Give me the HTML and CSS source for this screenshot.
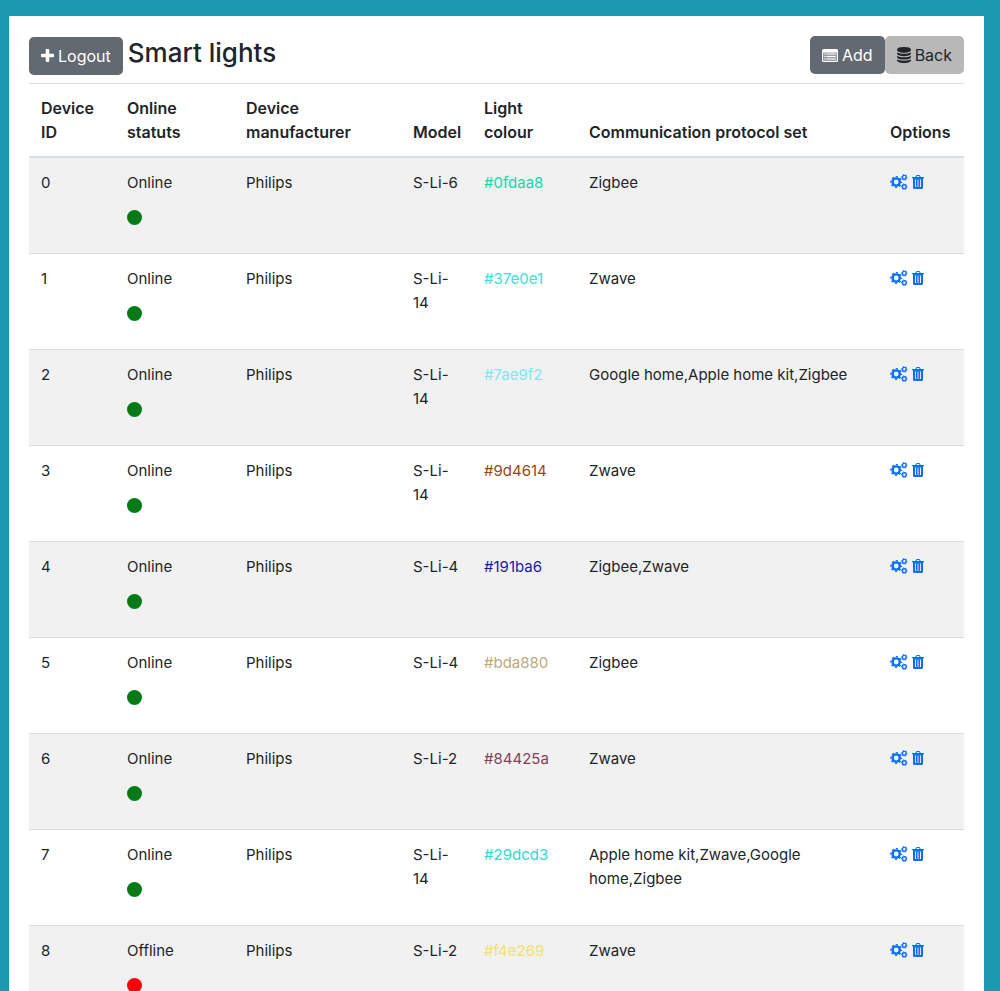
FILE: index.html
```html
<!DOCTYPE html>
<html lang="en">
<head>
<meta charset="utf-8">
<meta name="viewport" content="width=device-width, initial-scale=1">
<title>Smart lights</title>
<link rel="stylesheet" href="styles.css">
</head>
<body>
<svg class="sprite" aria-hidden="true">
  <symbol id="plus" viewBox="192 128 1408 1408"><path d="M1600 736v192q0 40-28 68t-68 28h-416v416q0 40-28 68t-68 28h-192q-40 0-68-28t-28-68v-416h-416q-40 0-68-28t-28-68v-192q0-40 28-68t68-28h416v-416q0-40 28-68t68-28h192q40 0 68 28t28 68v416h416q40 0 68 28t28 68z"/></symbol>
  <symbol id="database" viewBox="128 0 1536 1792"><path d="M896 768q237 0 443-43t325-127v170q0 69-103 128t-280 93.500-385 34.500-385-34.500-280-93.500-103-128v-170q119 84 325 127t443 43zm0 768q237 0 443-43t325-127v170q0 69-103 128t-280 93.500-385 34.500-385-34.500-280-93.500-103-128v-170q119 84 325 127t443 43zm0-384q237 0 443-43t325-127v170q0 69-103 128t-280 93.500-385 34.500-385-34.500-280-93.500-103-128v-170q119 84 325 127t443 43zm0-1152q208 0 385 34.500t280 93.500 103 128v128q0 69-103 128t-280 93.500-385 34.500-385-34.500-280-93.500-103-128v-128q0-69 103-128t280-93.500 385-34.500z"/></symbol>
  <symbol id="list" viewBox="0 0 16 13"><path opacity=".35" d="M1 3h14v9H1z"/><path fill-rule="evenodd" d="M1.500 0h13A1.500 1.500 0 0 1 16 1.500v10a1.500 1.500 0 0 1-1.500 1.500h-13A1.500 1.500 0 0 1 0 11.500v-10A1.500 1.500 0 0 1 1.500 0zM1 3.500v8q0 .5.5.5h13q.5 0 .5-.5v-8zM2.300 4.500h1.200v1.100H2.300zm2.200 0h9.200v1.100H4.500zM2.300 7h1.200v1.100H2.300zm2.200 0h9.200v1.100H4.500zM2.300 9.500h1.200v1.100H2.300zm2.200 0h9.200v1.100H4.500z"/></symbol>
  <symbol id="gears" viewBox="0 0 18 16"><g fill="none" stroke="currentColor"><circle cx="6.200" cy="8" r="3.600" stroke-width="2.400"/><circle cx="6.200" cy="8" r="5.200" stroke-width="1.600" stroke-dasharray="2 2.084" stroke-dashoffset="1"/><circle cx="14.300" cy="3.300" r="1.900" stroke-width="1.400"/><circle cx="14.300" cy="3.300" r="2.800" stroke-width="1" stroke-dasharray="1.300 1.632" stroke-dashoffset=".6"/><circle cx="14.300" cy="12.700" r="1.900" stroke-width="1.400"/><circle cx="14.300" cy="12.700" r="2.800" stroke-width="1" stroke-dasharray="1.300 1.632" stroke-dashoffset=".6"/></g></symbol>
  <symbol id="trash" viewBox="0 0 12 14"><path fill-rule="evenodd" d="M3.300 2l.6-1.300Q4.200 0 5 0h2q.8 0 1.100.7L8.700 2H12v1.200h-1V12.400Q11 14 9.700 14H2.300Q1 14 1 12.400V3.200H0V2zM4.500 2h3L7.100 1.100H4.900zM3.100 4.600v7.400H4V4.600zm2.450 0v7.400h.9V4.600zM8 4.600v7.400h.9V4.600z"/></symbol>
</svg>
<main class="panel">
  <header class="toolbar">
    <div class="heading">
      <button type="button" class="btn btn-dark"><svg class="icon-plus" aria-hidden="true"><use href="#plus"/></svg>Logout</button>
      <h1 class="title">Smart lights</h1>
    </div>
    <div class="actions">
      <button type="button" class="btn btn-dark"><svg class="icon-list" aria-hidden="true"><use href="#list"/></svg>Add</button>
      <button type="button" class="btn btn-light"><svg class="icon-database" aria-hidden="true"><use href="#database"/></svg>Back</button>
    </div>
  </header>
  <table class="lights">
    <colgroup><col class="col-id"><col class="col-status"><col class="col-maker"><col class="col-model"><col class="col-colour"><col><col class="col-options"></colgroup>
    <thead>
      <tr><th scope="col">Device ID</th><th scope="col">Online statuts</th><th scope="col">Device manufacturer</th><th scope="col">Model</th><th scope="col">Light colour</th><th scope="col">Communication protocol set</th><th scope="col">Options</th></tr>
    </thead>
    <tbody>
      <tr><td>0</td><td>Online<span class="dot"></span></td><td>Philips</td><td>S-Li-6</td><td style="color:#0fdaa8">#0fdaa8</td><td>Zigbee</td><td><div class="options"><a href="#edit-0" aria-label="Edit"><svg class="icon-gears"><use href="#gears"/></svg></a><a href="#delete-0" aria-label="Delete"><svg class="icon-trash"><use href="#trash"/></svg></a></div></td></tr>
      <tr><td>1</td><td>Online<span class="dot"></span></td><td>Philips</td><td>S-Li-14</td><td style="color:#37e0e1">#37e0e1</td><td>Zwave</td><td><div class="options"><a href="#edit-1" aria-label="Edit"><svg class="icon-gears"><use href="#gears"/></svg></a><a href="#delete-1" aria-label="Delete"><svg class="icon-trash"><use href="#trash"/></svg></a></div></td></tr>
      <tr><td>2</td><td>Online<span class="dot"></span></td><td>Philips</td><td>S-Li-14</td><td style="color:#7ae9f2">#7ae9f2</td><td>Google home,Apple home kit,Zigbee</td><td><div class="options"><a href="#edit-2" aria-label="Edit"><svg class="icon-gears"><use href="#gears"/></svg></a><a href="#delete-2" aria-label="Delete"><svg class="icon-trash"><use href="#trash"/></svg></a></div></td></tr>
      <tr><td>3</td><td>Online<span class="dot"></span></td><td>Philips</td><td>S-Li-14</td><td style="color:#9d4614">#9d4614</td><td>Zwave</td><td><div class="options"><a href="#edit-3" aria-label="Edit"><svg class="icon-gears"><use href="#gears"/></svg></a><a href="#delete-3" aria-label="Delete"><svg class="icon-trash"><use href="#trash"/></svg></a></div></td></tr>
      <tr><td>4</td><td>Online<span class="dot"></span></td><td>Philips</td><td>S-Li-4</td><td style="color:#191ba6">#191ba6</td><td>Zigbee,Zwave</td><td><div class="options"><a href="#edit-4" aria-label="Edit"><svg class="icon-gears"><use href="#gears"/></svg></a><a href="#delete-4" aria-label="Delete"><svg class="icon-trash"><use href="#trash"/></svg></a></div></td></tr>
      <tr><td>5</td><td>Online<span class="dot"></span></td><td>Philips</td><td>S-Li-4</td><td style="color:#bda880">#bda880</td><td>Zigbee</td><td><div class="options"><a href="#edit-5" aria-label="Edit"><svg class="icon-gears"><use href="#gears"/></svg></a><a href="#delete-5" aria-label="Delete"><svg class="icon-trash"><use href="#trash"/></svg></a></div></td></tr>
      <tr><td>6</td><td>Online<span class="dot"></span></td><td>Philips</td><td>S-Li-2</td><td style="color:#84425a">#84425a</td><td>Zwave</td><td><div class="options"><a href="#edit-6" aria-label="Edit"><svg class="icon-gears"><use href="#gears"/></svg></a><a href="#delete-6" aria-label="Delete"><svg class="icon-trash"><use href="#trash"/></svg></a></div></td></tr>
      <tr><td>7</td><td>Online<span class="dot"></span></td><td>Philips</td><td>S-Li-14</td><td style="color:#29dcd3">#29dcd3</td><td>Apple home kit,Zwave,Google home,Zigbee</td><td><div class="options"><a href="#edit-7" aria-label="Edit"><svg class="icon-gears"><use href="#gears"/></svg></a><a href="#delete-7" aria-label="Delete"><svg class="icon-trash"><use href="#trash"/></svg></a></div></td></tr>
      <tr><td>8</td><td>Offline<span class="dot dot-off"></span></td><td>Philips</td><td>S-Li-2</td><td style="color:#f4e269">#f4e269</td><td>Zwave</td><td><div class="options"><a href="#edit-8" aria-label="Edit"><svg class="icon-gears"><use href="#gears"/></svg></a><a href="#delete-8" aria-label="Delete"><svg class="icon-trash"><use href="#trash"/></svg></a></div></td></tr>
    </tbody>
  </table>
</main>
</body>
</html>
```
FILE: styles.css
```css
* { box-sizing: border-box; }
body {
  height: 100vh;
  margin: 0;
  padding: 16px 16px 0 9px;
  overflow: hidden;
  background: #1998af;
  color: #212529;
  font: 16px/24px Inter, "Liberation Sans", sans-serif;
}
.sprite { position: absolute; width: 0; height: 0; }
svg { fill: currentColor; flex: none; }
.panel { padding: 20px; background: #fff; }
.toolbar { display: flex; justify-content: space-between; align-items: flex-start; padding-bottom: 8px; }
.heading { display: flex; align-items: baseline; gap: 5px; }
.title { margin: 0; font-size: 26px; line-height: 34px; font-weight: 500; }
.actions { display: flex; }
.btn {
  display: flex;
  align-items: center;
  gap: 4px;
  height: 38px;
  padding: 0 12px;
  border: 0;
  border-radius: 5px;
  font: inherit;
}
.btn-dark { background: #626970; color: #fff; }
.btn-light { background: #b8b8b8; color: #212529; }
.icon-plus { width: 13px; height: 13px; }
.icon-list { width: 16px; height: 13px; }
.icon-database { width: 14px; height: 16px; }
.lights { width: 100%; table-layout: fixed; border-collapse: separate; border-spacing: 0; }
.col-id { width: 86px; }
.col-status { width: 119px; }
.col-maker { width: 167px; }
.col-model { width: 71px; }
.col-colour { width: 105px; }
.col-options { width: 86px; }
th, td { padding: 12px; text-align: left; border-top: 1px solid #dcdddf; }
th { vertical-align: bottom; border-bottom: 2px solid #dadfe3; font-weight: 600; }
td { padding: 13px 12px 11px; vertical-align: top; font-size: 15px; }
tbody tr:first-child td { border-top: 0; }
tbody tr:nth-child(odd) { background: #f1f1f1; }
.dot { display: block; width: 15px; height: 15px; margin: 15px 0 17px; border-radius: 50%; background: #067a17; }
.dot-off { background: #ff000b; }
.options { display: flex; align-items: center; gap: 4px; height: 22px; }
.options a { display: flex; color: #0d6efd; }
.icon-gears { width: 18px; height: 16px; }
.icon-trash { width: 12px; height: 14px; }
```
